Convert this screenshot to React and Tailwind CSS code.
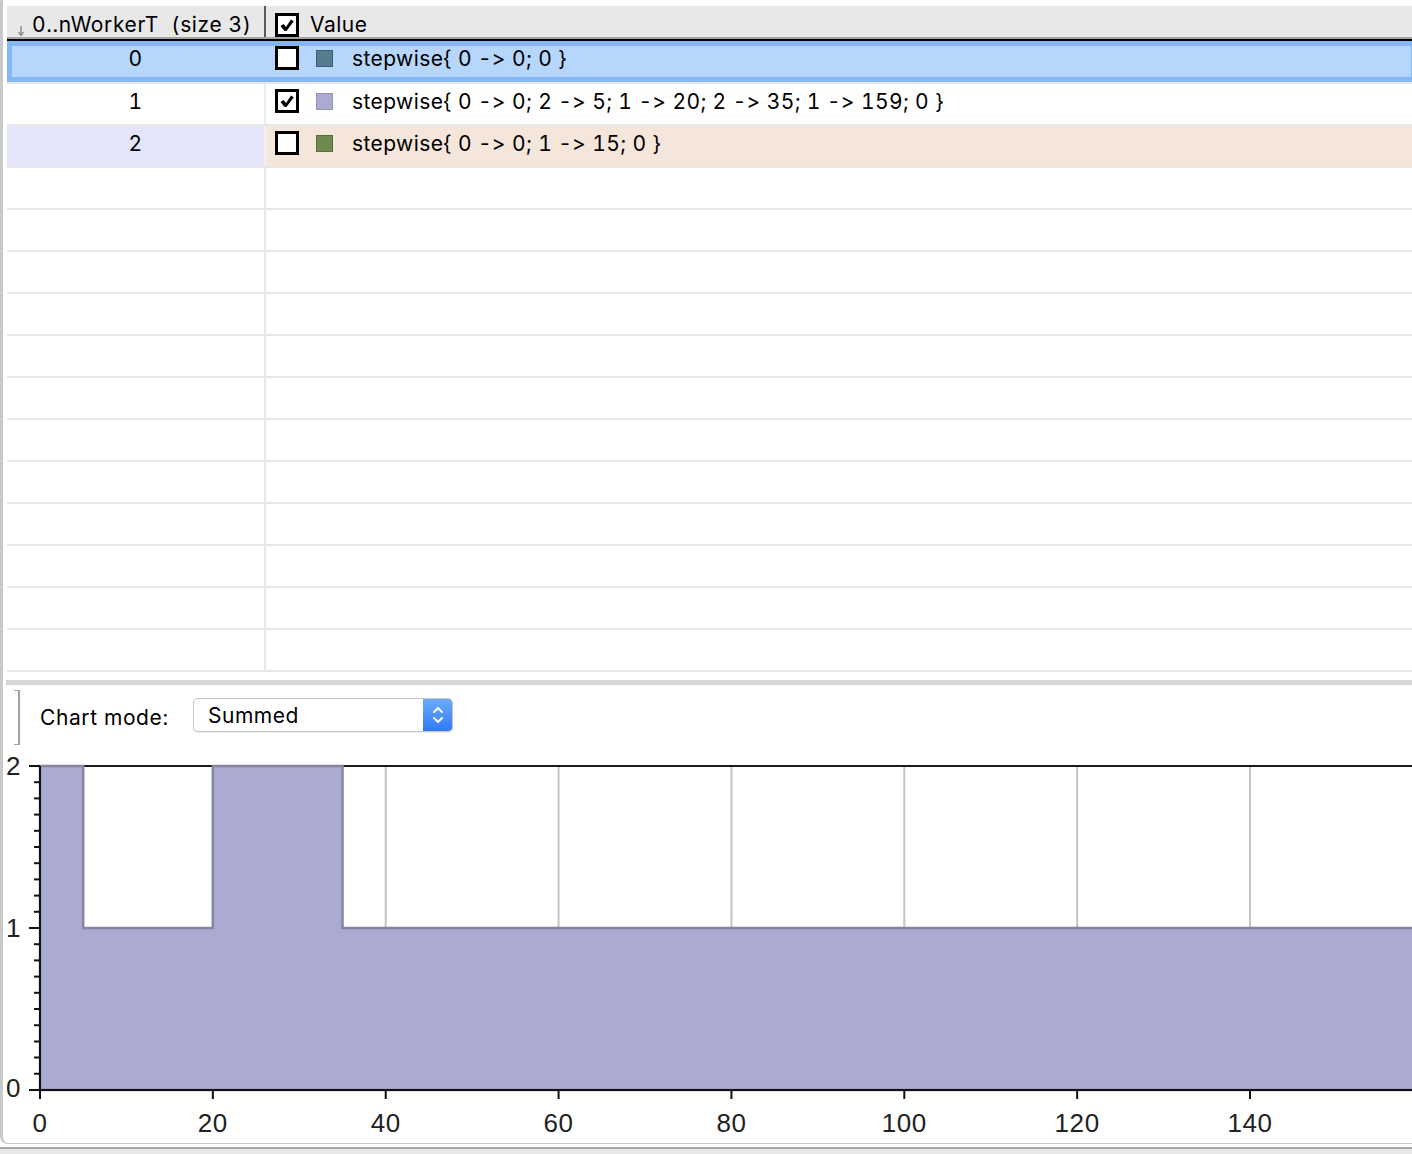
import React from "react";

const SX = 8.643;
const X0 = 40;
const Y0 = 1090;
const SY = 162;
const px = (v) => X0 + v * SX;
const py = (v) => Y0 - v * SY;

function Check() {
  return (
    <svg width="18" height="18" viewBox="0 0 18 18" className="block">
      <polygon points="2.5,10 5.5,8 8,11 13,3.5 15.8,5.2 8.5,15 6.5,15" fill="#000" />
    </svg>
  );
}

function Box({ checked }) {
  return (
    <div className="w-[24px] h-[24px] border-[3px] border-black bg-white flex items-center justify-center shrink-0">
      {checked ? <Check /> : null}
    </div>
  );
}

function Swatch({ cls }) {
  return <div className={cls} />;
}

function RowLine() {
  return <div className="h-[2px] bg-[#e7e7e7]" />;
}

function EmptyRow() {
  return (
    <>
      <div className="h-[40px] flex">
        <div className="w-[257px]" />
        <div className="w-[2px] bg-[#e7e7e7]" />
        <div className="flex-1" />
      </div>
      <RowLine />
    </>
  );
}

function Chevrons() {
  return (
    <svg width="14" height="24" viewBox="0 0 14 24" className="block">
      <polyline points="3,9 7,5 11,9" fill="none" stroke="#fff" strokeWidth="2" strokeLinecap="round" strokeLinejoin="round" />
      <polyline points="3,15 7,19 11,15" fill="none" stroke="#fff" strokeWidth="2" strokeLinecap="round" strokeLinejoin="round" />
    </svg>
  );
}

function Chart() {
  const gridXs = [1, 2, 3, 4, 5, 6, 7].map((k) => px(k * 20));
  const xTicks = [0, 20, 40, 60, 80, 100, 120, 140];
  const minor = [];
  for (let i = 1; i < 20; i++) if (i !== 10) minor.push(Y0 - i * 16.2);
  const fillPath = `M${px(0)} ${py(0)} L${px(0)} ${py(2)} L${px(5)} ${py(2)} L${px(5)} ${py(1)} L${px(20)} ${py(1)} L${px(20)} ${py(2)} L${px(35)} ${py(2)} L${px(35)} ${py(1)} L1420 ${py(1)} L1420 ${py(0)} Z`;
  const font = "'Liberation Sans', Arial, sans-serif";
  return (
    <svg width="1409" height="398" viewBox="3 745 1409 398" className="block">
      {gridXs.map((x) => (
        <line key={x} x1={x} y1={766} x2={x} y2={1090} stroke="#c4c4c4" strokeWidth="2" />
      ))}
      <line x1={40} y1={766} x2={1420} y2={766} stroke="#1a1a1a" strokeWidth="2" />
      <path d={fillPath} fill="#aaaad2" stroke="#8585a2" strokeWidth="2.5" />
      <line x1={40} y1={1090} x2={1420} y2={1090} stroke="#111" strokeWidth="2" />
      <line x1={40} y1={766} x2={40} y2={1099} stroke="#111" strokeWidth="2" />
      {[766, 928, 1090].map((y) => (
        <line key={y} x1={29} y1={y} x2={40} y2={y} stroke="#111" strokeWidth="2" />
      ))}
      {minor.map((y) => (
        <line key={y} x1={34} y1={y} x2={40} y2={y} stroke="#111" strokeWidth="2" />
      ))}
      {xTicks.map((v) => (
        <line key={v} x1={px(v)} y1={1090} x2={px(v)} y2={1099} stroke="#111" strokeWidth="2" />
      ))}
      {xTicks.map((v) => (
        <text key={v} x={px(v)} y={1132} textAnchor="middle" fontFamily={font} fontSize="26" fill="#222">
          {v}
        </text>
      ))}
      <text x={21} y={775} textAnchor="end" fontFamily={font} fontSize="26" fill="#222">2</text>
      <text x={21} y={937} textAnchor="end" fontFamily={font} fontSize="26" fill="#222">1</text>
      <text x={21} y={1097} textAnchor="end" fontFamily={font} fontSize="26" fill="#222">0</text>
    </svg>
  );
}

export default function App() {
  const empties = Array.from({ length: 12 }, (_, i) => i);
  return (
    <div className="w-[1412px] h-[1154px] bg-white overflow-hidden font-['Inter',sans-serif] [font-variant-ligatures:none] [font-feature-settings:'calt'_0,'liga'_0,'tnum'_1] tabular-nums tracking-[0.6px] text-black flex flex-col">
      <div className="h-[1144px] shrink-0 flex flex-col border-l-[3px] border-b border-[#c9c9c7] rounded-bl-[8px] overflow-hidden">
        {/* table */}
        <div className="pl-[4px] pt-[6px] w-[1413px] flex flex-col shrink-0">
          {/* header */}
          <div className="flex flex-col h-[35px] bg-[#e8e8e8]">
            <div className="flex h-[31px] pt-[6px]">
              <div className="w-[257px] flex items-center">
                <svg width="6" height="10" viewBox="0 0 6 10" className="block ml-[11px] self-end mb-[1px]">
                  <line x1="3" y1="0" x2="3" y2="8" stroke="#7a7a7a" strokeWidth="1.2" />
                  <polyline points="0.5,6 3,9.5 5.5,6" fill="none" stroke="#7a7a7a" strokeWidth="1.2" />
                </svg>
                <span className="ml-[8px] text-[21px] leading-none whitespace-pre">0..nWorkerT  (size 3)</span>
              </div>
              <div className="w-[2px] bg-[#5a5a5a] -mt-[6px]" />
              <div className="flex items-center pl-[9px]">
                <Box checked />
                <span className="ml-[11px] text-[21px] leading-none tracking-[0.5px]">Value</span>
              </div>
            </div>
            <div className="h-[2px] bg-[#a3a3a3]" />
            <div className="h-[2px] bg-black" />
          </div>

          {/* row 0 (selected) */}
          <div className="h-[41px] flex pb-[7px] items-center bg-[#b7d6fb] shadow-[inset_0_0_0_5px_#85b7f6] tracking-[0.4px]">
            <div className="w-[257px] text-center text-[21px] leading-none">0</div>
            <div className="w-[2px] self-stretch" />
            <div className="flex items-center pl-[9px]">
              <Box />
              <Swatch cls="ml-[17px] w-[17px] h-[17px] bg-[#547d90] border border-[#3f6070]" />
              <span className="ml-[19px] text-[21px] leading-none whitespace-pre">{"stepwise{ 0 -> 0; 0 }"}</span>
            </div>
          </div>
          <RowLine />

          {/* row 1 */}
          <div className="h-[40px] flex tracking-[0.4px]">
            <div className="w-[257px] flex items-center justify-center pb-[6px] text-[21px] leading-none">1</div>
            <div className="w-[2px] bg-[#ededed]" />
            <div className="flex-1 flex items-center pl-[9px] pb-[6px]">
              <Box checked />
              <Swatch cls="ml-[17px] w-[17px] h-[17px] bg-[#abaad3] border border-[#9494b4]" />
              <span className="ml-[19px] text-[21px] leading-none whitespace-pre">{"stepwise{ 0 -> 0; 2 -> 5; 1 -> 20; 2 -> 35; 1 -> 159; 0 }"}</span>
            </div>
          </div>
          <RowLine />

          {/* row 2 */}
          <div className="h-[40px] flex tracking-[0.4px]">
            <div className="w-[257px] flex items-center justify-center pb-[6px] text-[21px] leading-none bg-[#e4e5f8]">2</div>
            <div className="w-[2px] bg-[#f3f0f0]" />
            <div className="flex-1 flex items-center pl-[9px] pb-[6px] bg-[#f5e6db]">
              <Box />
              <Swatch cls="ml-[17px] w-[17px] h-[17px] bg-[#6f8a4e] border border-[#56703b]" />
              <span className="ml-[19px] text-[21px] leading-none whitespace-pre">{"stepwise{ 0 -> 0; 1 -> 15; 0 }"}</span>
            </div>
          </div>
          <RowLine />

          {empties.map((i) => (
            <EmptyRow key={i} />
          ))}
        </div>

        <div className="h-[8px] shrink-0" />
        <div className="h-[5px] ml-[3px] bg-[#d6d6d6] shrink-0" />

        {/* chart panel */}
        <div className="flex flex-col flex-1">
          <div className="h-[60px] flex items-center shrink-0">
            <div className="self-start ml-[11px] mt-[5px] w-[6px] h-[55px] border-r-2 border-t border-b border-[#a0a0a0]" />
            <div className="ml-[20px] w-[153px] text-[21px] leading-none pt-[5px]">Chart mode:</div>
            <div className="w-[260px] h-[34px] flex rounded-[5px] border border-[#c6c6c6] bg-white shadow-[0_1px_1px_rgba(0,0,0,0.08)] overflow-hidden">
              <div className="flex-1 flex items-center pl-[14px] text-[21px] leading-none tracking-[0.5px]">Summed</div>
              <div className="w-[29px] flex items-center justify-center bg-gradient-to-b from-[#6cacfa] to-[#2f79f5]">
                <Chevrons />
              </div>
            </div>
          </div>
          <Chart />
        </div>
      </div>
      <div className="h-[3px] bg-white shrink-0" />
      <div className="h-[2px] bg-[#a9a9a9] shrink-0" />
      <div className="flex-1 bg-[#e8e8e8]" />
    </div>
  );
}
